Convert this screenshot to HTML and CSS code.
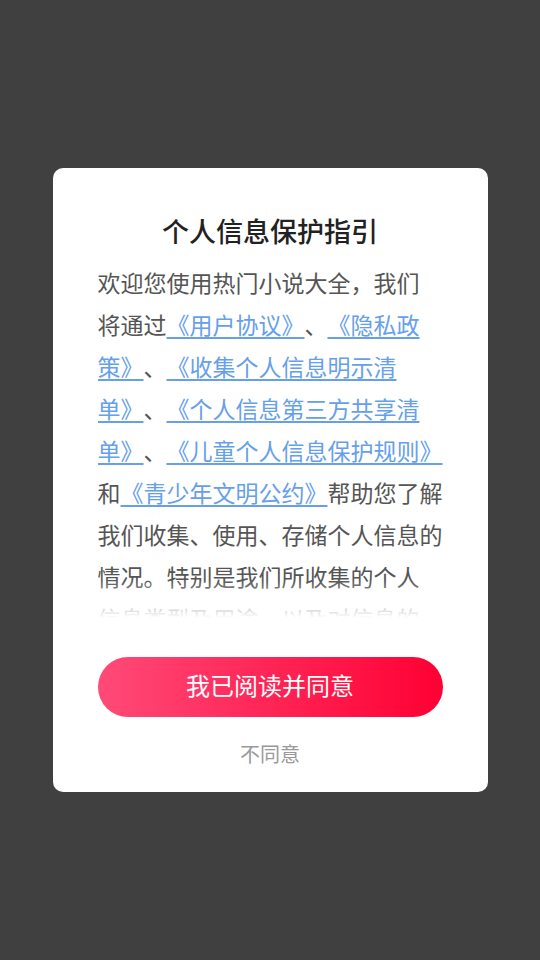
FILE: index.html
```html
<!DOCTYPE html>
<html lang="zh-CN">
<head>
    <meta charset="UTF-8">
    <meta name="viewport" content="width=device-width, initial-scale=1.0">
    <title>个人信息保护指引</title>
    <link rel="stylesheet" href="styles.css">
</head>
<body>
    <div class="dialog">
        <h2 class="dialog-title">个人信息保护指引</h2>
        <div class="dialog-body">
            <p class="policy-text">欢迎您使用热门小说大全，我们<br>将通过<a href="#">《用户协议》</a>、<a href="#">《隐私政<br>策》</a>、<a href="#">《收集个人信息明示清<br>单》</a>、<a href="#">《个人信息第三方共享清<br>单》</a>、<a href="#">《儿童个人信息保护规则》</a><br>和<a href="#">《青少年文明公约》</a>帮助您了解<br>我们收集、使用、存储个人信息的<br>情况。特别是我们所收集的个人<br>信息类型及用途，以及对信息的</p>
        </div>
        <button class="agree-btn">我已阅读并同意</button>
        <button class="disagree-btn">不同意</button>
    </div>
</body>
</html>
```

FILE: styles.css
```css
body {
    margin: 0;
    min-height: 100vh;
    background-color: #404040;
    font-family: "Noto Sans CJK SC", "Noto Sans", sans-serif;
    text-spacing-trim: space-all;
    display: flex;
    justify-content: center;
    align-items: center;
}

.dialog {
    width: 435px;
    box-sizing: border-box;
    padding: 45px 45px 24px;
    background-color: #fff;
    border-radius: 10px;
    display: flex;
    flex-direction: column;
    align-items: center;
}

.dialog-title {
    margin: 0;
    font-size: 27px;
    line-height: 36px;
    font-weight: 500;
    color: #222;
}

.dialog-body {
    position: relative;
    width: 345px;
    height: 361px;
    margin-top: 12px;
    overflow: hidden;
}

/* fade out the text that runs past the bottom */
.dialog-body::after {
    content: "";
    position: absolute;
    left: 0;
    right: 0;
    bottom: 0;
    height: 42px;
    background: linear-gradient(rgba(255, 255, 255, 0), #fff 90%);
}

.policy-text {
    margin: 0;
    font-size: 23px;
    line-height: 42px;
    color: #555;
    white-space: nowrap;
}

.policy-text a {
    color: #66a0ea;
    text-decoration: underline;
    text-decoration-thickness: 1.5px;
    text-underline-offset: 3px;
}

.agree-btn {
    width: 345px;
    height: 60px;
    margin-top: 35px;
    border: none;
    border-radius: 30px;
    background: linear-gradient(to right, #ff4a78, #ff0033);
    color: #fff;
    font-family: inherit;
    font-size: 24px;
    line-height: 56px;
    padding: 0 0 4px;
    cursor: pointer;
}

.disagree-btn {
    margin-top: 23px;
    padding: 0;
    border: none;
    background: none;
    color: #999;
    font-family: inherit;
    font-size: 20px;
    line-height: 28px;
    cursor: pointer;
}
```
